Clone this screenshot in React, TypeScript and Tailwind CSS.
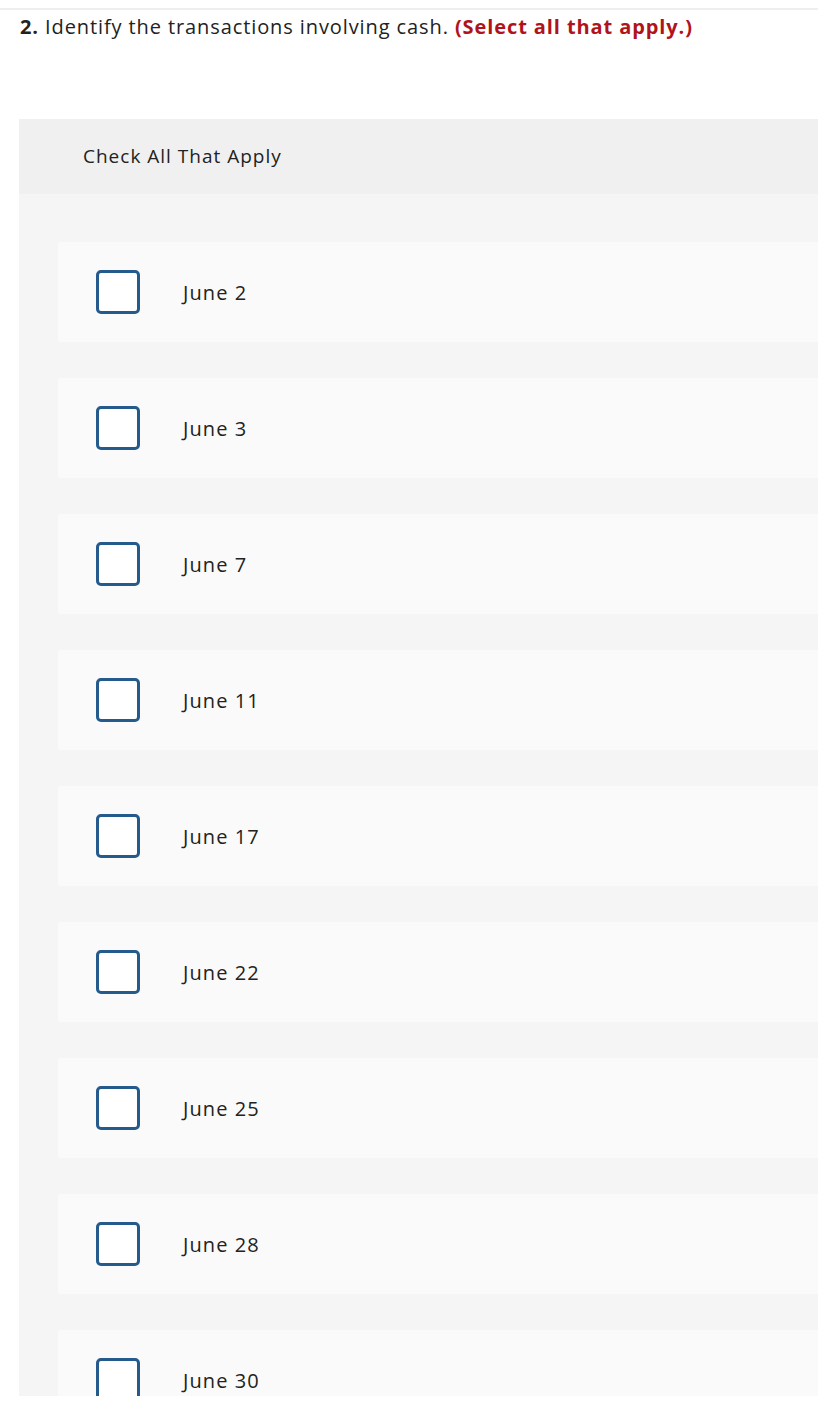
const OPTIONS = ['June 2', 'June 3', 'June 7', 'June 11', 'June 17', 'June 22', 'June 25', 'June 28', 'June 30'];

function Option({ label }: { label: string }) {
  return (
    <label className="flex h-[100px] items-center rounded-[4px] bg-[#fafafa] pl-[38px]">
      <span className="block h-[44px] w-[44px] shrink-0 rounded-[5px] border-[3px] border-[#245a8c] bg-white" />
      <span className="ml-[43px] mt-[1px] text-[20px] tracking-[1.1px] text-[#222]">{label}</span>
    </label>
  );
}

export default function App() {
  return (
    <div className="h-[1396px] overflow-hidden bg-white font-['Open_Sans','Liberation_Sans',sans-serif]">
      <div className="mt-[8px] h-[2px] bg-[#eeeeee]" />
      <h2 className="ml-[20px] mt-[5px] text-[20px] leading-[24px] tracking-[0.9px] text-[#222]">
        <span className="font-bold">2.</span> Identify the transactions involving cash.{' '}
        <span className="font-bold text-[#b0131c]">(Select all that apply.)</span>
      </h2>
      <div className="ml-[19px] mt-[80px] w-[1000px] bg-[#f5f5f5]">
        <div className="flex h-[75px] items-center bg-[#f0f0f0] pl-[64px] text-[19px] tracking-[1px] text-[#222]">
          Check All That Apply
        </div>
        <div className="flex flex-col gap-[36px] pl-[39px] pt-[48px] pb-[48px]">
          {OPTIONS.map((o) => (
            <Option key={o} label={o} />
          ))}
        </div>
      </div>
    </div>
  );
}
